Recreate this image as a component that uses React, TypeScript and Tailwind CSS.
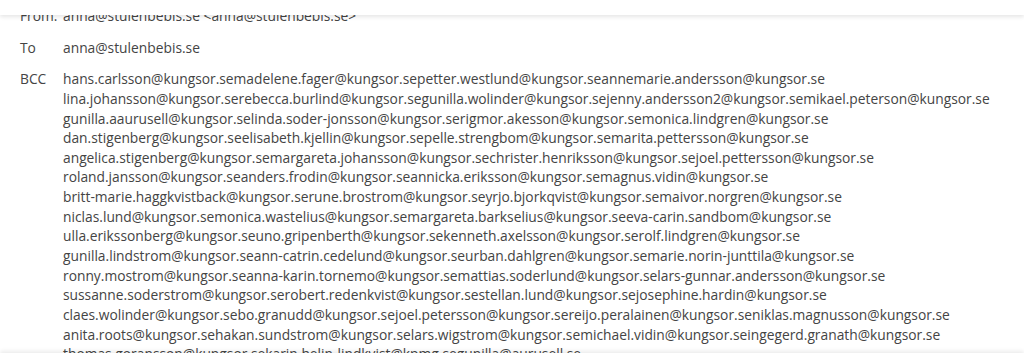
import React from "react";

const bcc = [
  "hans.carlsson@kungsor.semadelene.fager@kungsor.sepetter.westlund@kungsor.seannemarie.andersson@kungsor.se",
  "lina.johansson@kungsor.serebecca.burlind@kungsor.segunilla.wolinder@kungsor.sejenny.andersson2@kungsor.semikael.peterson@kungsor.se",
  "gunilla.aaurusell@kungsor.selinda.soder-jonsson@kungsor.serigmor.akesson@kungsor.semonica.lindgren@kungsor.se",
  "dan.stigenberg@kungsor.seelisabeth.kjellin@kungsor.sepelle.strengbom@kungsor.semarita.pettersson@kungsor.se",
  "angelica.stigenberg@kungsor.semargareta.johansson@kungsor.sechrister.henriksson@kungsor.sejoel.pettersson@kungsor.se",
  "roland.jansson@kungsor.seanders.frodin@kungsor.seannicka.eriksson@kungsor.semagnus.vidin@kungsor.se",
  "britt-marie.haggkvistback@kungsor.serune.brostrom@kungsor.seyrjo.bjorkqvist@kungsor.semaivor.norgren@kungsor.se",
  "niclas.lund@kungsor.semonica.wastelius@kungsor.semargareta.barkselius@kungsor.seeva-carin.sandbom@kungsor.se",
  "ulla.erikssonberg@kungsor.seuno.gripenberth@kungsor.sekenneth.axelsson@kungsor.serolf.lindgren@kungsor.se",
  "gunilla.lindstrom@kungsor.seann-catrin.cedelund@kungsor.seurban.dahlgren@kungsor.semarie.norin-junttila@kungsor.se",
  "ronny.mostrom@kungsor.seanna-karin.tornemo@kungsor.semattias.soderlund@kungsor.selars-gunnar.andersson@kungsor.se",
  "sussanne.soderstrom@kungsor.serobert.redenkvist@kungsor.sestellan.lund@kungsor.sejosephine.hardin@kungsor.se",
  "claes.wolinder@kungsor.sebo.granudd@kungsor.sejoel.petersson@kungsor.sereijo.peralainen@kungsor.seniklas.magnusson@kungsor.se",
  "anita.roots@kungsor.sehakan.sundstrom@kungsor.selars.wigstrom@kungsor.semichael.vidin@kungsor.seingegerd.granath@kungsor.se",
  "thomas.goransson@kungsor.sekarin.helin-lindkvist@kpmg.segunilla@aurusell.se",
];

export default function App() {
  return (
    <div
      className="relative h-[362px] w-[1024px] overflow-hidden bg-white text-[#444444]"
      style={{ fontFamily: '"Open Sans", "Noto Sans", sans-serif' }}
    >
      <div className="flex flex-col gap-[12px] pt-[6px] text-[13.8px] leading-[19.64px]">
        <div className="flex">
          <div className="w-[63px] shrink-0 pl-[20px]">From:</div>
          <div>anna@stulenbebis.se &lt;anna@stulenbebis.se&gt;</div>
        </div>
        <div className="flex">
          <div className="w-[63px] shrink-0 pl-[20px]">To</div>
          <div>anna@stulenbebis.se</div>
        </div>
        <div className="flex">
          <div className="w-[63px] shrink-0 pl-[20px]">BCC</div>
          <div className="flex flex-col whitespace-nowrap">
            {bcc.map((l) => (
              <div key={l}>{l}</div>
            ))}
          </div>
        </div>
      </div>
      <div className="absolute left-0 right-0 top-0 h-[15px] bg-white shadow-[0_2px_4px_rgba(0,0,0,0.1)]" />
      <div className="absolute bottom-0 left-0 right-0 h-[9px] bg-white shadow-[0_-2px_4px_rgba(0,0,0,0.08)]" />
    </div>
  );
}
